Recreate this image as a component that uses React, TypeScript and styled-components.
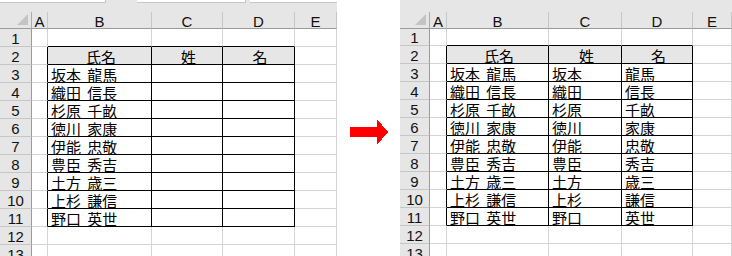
import React from "react";
import styled, { createGlobalStyle } from "styled-components";

const GlobalStyle = createGlobalStyle`
  html, body {
    margin: 0;
    padding: 0;
    height: 256px;
    overflow: hidden;
    background: #ffffff;
  }
`;

const names: [string, string][] = [
  ["坂本", "龍馬"],
  ["織田", "信長"],
  ["杉原", "千畝"],
  ["徳川", "家康"],
  ["伊能", "忠敬"],
  ["豊臣", "秀吉"],
  ["土方", "歳三"],
  ["上杉", "謙信"],
  ["野口", "英世"],
];

const GRID = "#d4d4d4";
const HEAD_BG = "#e6e6e6";
const HEAD_LINE = "#ababab";

const Page = styled.div`
  display: flex;
  align-items: flex-start;
  width: 732px;
  height: 256px;
  overflow: hidden;
`;

const SheetWrap = styled.div<{ $width: number }>`
  width: ${({ $width }) => $width}px;
  flex-shrink: 0;
  display: flex;
  flex-direction: column;
  overflow: hidden;
`;

const Toolbar = styled.div`
  height: 12px;
  background: ${HEAD_BG};
  display: flex;
  align-items: flex-start;
`;

const InputBox = styled.div<{ $width: number; $gap: number }>`
  width: ${({ $width }) => $width}px;
  margin-right: ${({ $gap }) => $gap}px;
  height: 2px;
  background: #ffffff;
  border-bottom: 1px solid #c6c6c6;
  border-right: 1px solid #c6c6c6;
  flex-shrink: 0;
`;

const Grid = styled.div<{ $cols: string; $first: number }>`
  display: grid;
  grid-template-columns: ${({ $cols }) => $cols};
  grid-template-rows: 17px ${({ $first }) => $first}px;
  grid-auto-rows: 18px;
  font-family: "Liberation Sans", Arial, sans-serif;
`;

const Corner = styled.div`
  background: ${HEAD_BG};
  border-right: 1px solid ${HEAD_LINE};
  border-bottom: 1px solid #9b9b9b;
  position: relative;
  box-sizing: border-box;
  &::after {
    content: "";
    position: absolute;
    right: 3px;
    bottom: 3px;
    width: 0;
    height: 0;
    border-left: 11px solid transparent;
    border-bottom: 11px solid #c4c4c4;
  }
`;

const ColHead = styled.div`
  background: ${HEAD_BG};
  border-right: 1px solid #c6c6c6;
  border-bottom: 1px solid #9b9b9b;
  box-sizing: border-box;
  display: flex;
  align-items: center;
  justify-content: center;
  font-size: 15px;
  color: #111;
  padding-top: 2px;
`;

const RowHead = styled.div`
  background: ${HEAD_BG};
  border-right: 1px solid #9b9b9b;
  border-bottom: 1px solid #c6c6c6;
  box-sizing: border-box;
  display: flex;
  align-items: center;
  justify-content: center;
  font-size: 15px;
  color: #111;
  padding-top: 1px;
`;

const Cell = styled.div<{
  $right?: boolean;
  $bottom?: boolean;
  $fill?: boolean;
  $center?: boolean;
}>`
  box-sizing: border-box;
  border-right: 1px solid ${({ $right }) => ($right ? "#000" : GRID)};
  border-bottom: 1px solid ${({ $bottom }) => ($bottom ? "#000" : GRID)};
  background: ${({ $fill }) => ($fill ? "#e7e6e6" : "#fff")};
  display: flex;
  align-items: center;
  justify-content: ${({ $center }) => ($center ? "center" : "flex-start")};
  padding: 1px 0 0 3px;
  font-family: "Noto Sans CJK JP", sans-serif;
  font-size: 15px;
  line-height: 1;
  word-spacing: 3px;
  color: #000;
  white-space: nowrap;
  overflow: hidden;
`;

type SheetProps = {
  width: number;
  cols: number[];
  firstRow: number;
  filled: boolean;
  inputs?: boolean;
};

function Sheet({ width, cols, firstRow, filled, inputs }: SheetProps) {
  const template = cols.map((c) => `${c}px`).join(" ") + " 1fr";
  const letters = ["A", "B", "C", "D", "E"];

  const rows: React.ReactNode[] = [];
  for (let r = 1; r <= 13; r++) {
    const inTable = r >= 2 && r <= 11;
    const above = r === 1;
    const person = r >= 3 && r <= 11 ? names[r - 3] : null;
    const header = r === 2;

    let b = "";
    let c = "";
    let d = "";
    if (header) {
      b = "氏名";
      c = "姓";
      d = "名";
    } else if (person) {
      b = `${person[0]} ${person[1]}`;
      if (filled) {
        c = person[0];
        d = person[1];
      }
    }

    rows.push(
      <React.Fragment key={r}>
        <RowHead>{r}</RowHead>
        <Cell $right={inTable} />
        <Cell $right={inTable} $bottom={inTable || above} $fill={header} $center={header}>
          {b}
        </Cell>
        <Cell $right={inTable} $bottom={inTable || above} $fill={header} $center={header}>
          {c}
        </Cell>
        <Cell $right={inTable} $bottom={inTable || above} $fill={header} $center={header}>
          {d}
        </Cell>
        <Cell />
      </React.Fragment>
    );
  }

  return (
    <SheetWrap $width={width}>
      <Toolbar>
        {inputs && (
          <>
            <InputBox $width={105} $gap={31} />
            <InputBox $width={108} $gap={4} />
            <InputBox $width={90} $gap={0} />
          </>
        )}
      </Toolbar>
      <Grid $cols={template} $first={firstRow}>
        <Corner />
        {letters.map((l) => (
          <ColHead key={l}>{l}</ColHead>
        ))}
        {rows}
      </Grid>
    </SheetWrap>
  );
}

const ArrowSlot = styled.div`
  width: 63px;
  flex-shrink: 0;
  height: 256px;
  display: flex;
  align-items: flex-start;
  padding-top: 119px;
  padding-left: 13px;
  box-sizing: border-box;
`;

function RightArrow() {
  return (
    <svg width="38" height="27" viewBox="0 0 38 27" shapeRendering="crispEdges">
      <path d="M0 8 H27 V0 L38 13 L27 26 V18 H0 Z" fill="#ff0000" />
    </svg>
  );
}

export default function App() {
  return (
    <>
      <GlobalStyle />
      <Page>
        <Sheet width={337} cols={[32, 16, 104, 71, 72]} firstRow={18} filled={false} inputs />
        <ArrowSlot>
          <RightArrow />
        </ArrowSlot>
        <Sheet width={332} cols={[30, 17, 102, 73, 71]} firstRow={17} filled />
      </Page>
    </>
  );
}
